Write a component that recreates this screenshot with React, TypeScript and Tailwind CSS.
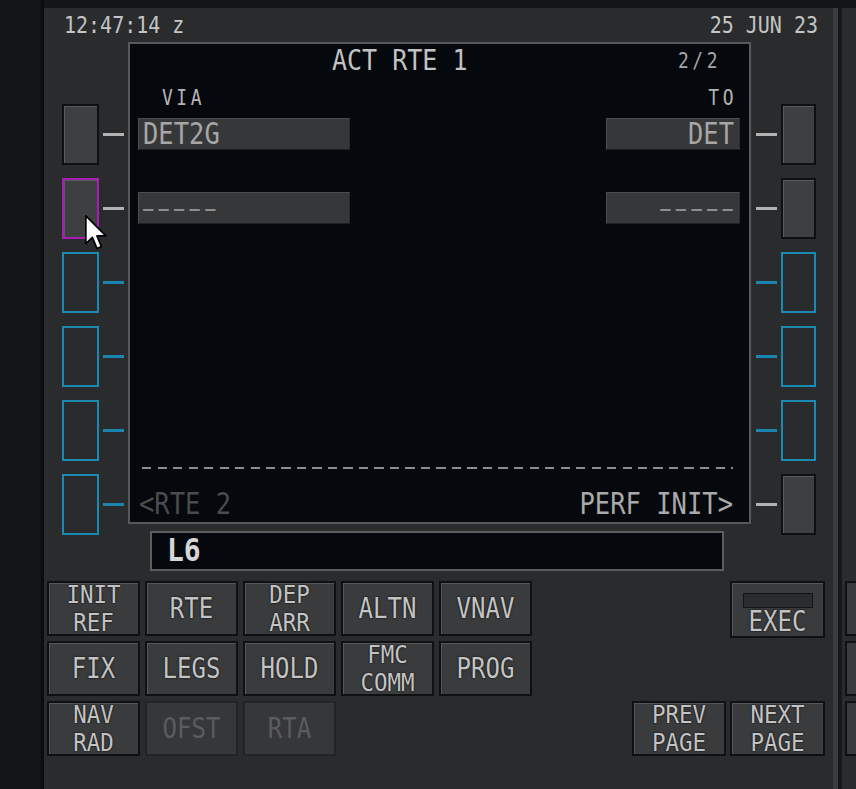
import React from "react";

type LskKind = "btn" | "sel" | "cyan";

const leftKinds: LskKind[] = ["btn", "sel", "cyan", "cyan", "cyan", "cyan"];
const rightKinds: LskKind[] = ["btn", "btn", "cyan", "cyan", "cyan", "btn"];

function LskBox({ kind, wide }: { kind: LskKind; wide?: boolean }) {
  const w = wide ? "w-[37px]" : "w-[35px]";
  if (kind === "cyan") {
    return <div className={"h-full border-2 border-[#1b8bb4] " + w} />;
  }
  if (kind === "sel") {
    return (
      <div className={"h-full border-2 border-[#a81db4] bg-[#3e3f41] shadow-[inset_1px_1px_0_#58595b] " + w} />
    );
  }
  return (
    <div className={"h-full border-2 border-[#0e0f10] bg-[#3e3f41] shadow-[inset_1px_1px_0_#5a5b5d] " + w} />
  );
}

function Dash({ kind }: { kind: LskKind }) {
  return (
    <div className={"h-[3px] w-[21px] " + (kind === "cyan" ? "bg-[#1a86ae]" : "bg-[#b2b2b2]")} />
  );
}

function Tx({ children, className }: { children: React.ReactNode; className?: string }) {
  return <span className={"inline-block scale-y-[1.16] whitespace-pre " + (className ?? "")}>{children}</span>;
}

function Field({ text, right, w }: { text: string; right?: boolean; w: string }) {
  return (
    <div
      className={
        "flex h-[32px] items-center border border-t-[#4b4c4e] border-l-[#4b4c4e] border-b-[#1e1f21] border-r-[#2a2b2d] bg-[#363739] " +
        w +
        (right ? " justify-end pr-[5px]" : " pl-[4px]")
      }
    >
      <Tx className="text-[25.5px] leading-[30px] text-[#a6a6a6]">{text}</Tx>
    </div>
  );
}

// empty entry prompt: five dashes
function Dashes({ right, w }: { right?: boolean; w: string }) {
  return (
    <div
      className={
        "flex h-[32px] items-center border border-t-[#4b4c4e] border-l-[#4b4c4e] border-b-[#1e1f21] border-r-[#2a2b2d] bg-[#363739] " +
        w +
        (right ? " justify-end pr-[1px]" : " pl-[4px]")
      }
    >
      <span className="-mt-[2px] inline-block scale-y-[1.8] whitespace-pre text-[17px] leading-[20px] tracking-[5.3px] text-[#8e8e8e]">
        –––––
      </span>
    </div>
  );
}

function Key({ lines, dim, w }: { lines: string[]; dim?: boolean; w?: string }) {
  const two = lines.length > 1;
  return (
    <div
      className={
        "flex h-[55px] items-center justify-center " +
        (w ?? "w-[93px]") +
        (dim
          ? " border-2 border-[#232426] bg-[#363739] text-[#5b5c5d]"
          : " border-2 border-[#0f1011] bg-[#3a3b3d] text-[#c3c3c3] shadow-[inset_1px_1px_0_#55565a] [text-shadow:0_0_2px_#000]")
      }
    >
      {two ? (
        <span className="inline-block scale-y-[1.08] text-center text-[22.5px] leading-[25.5px]">
          {lines[0]}
          <br />
          {lines[1]}
        </span>
      ) : (
        <span className="inline-block scale-y-[1.16] text-[24px] leading-[26px]">{lines[0]}</span>
      )}
    </div>
  );
}

const keyRows: { lines: string[]; dim?: boolean }[][] = [
  [{ lines: ["INIT", "REF"] }, { lines: ["RTE"] }, { lines: ["DEP", "ARR"] }, { lines: ["ALTN"] }, { lines: ["VNAV"] }],
  [{ lines: ["FIX"] }, { lines: ["LEGS"] }, { lines: ["HOLD"] }, { lines: ["FMC", "COMM"] }, { lines: ["PROG"] }],
  [{ lines: ["NAV", "RAD"] }, { lines: ["OFST"], dim: true }, { lines: ["RTA"], dim: true }],
];

export default function App() {
  return (
    <div className="relative flex h-[789px] w-[856px] overflow-hidden bg-[#141517] font-['DejaVu_Sans_Mono',monospace]">
      {/* dark area left of the unit */}
      <div className="w-[44px] border-r-[3px] border-[#0b0c0d] bg-[#131416]" />

      {/* CDU panel */}
      <div className="mt-[8px] flex h-[781px] w-[789px] flex-col bg-[#2a2b2d]">
        <div className="flex h-[34px] shrink-0 items-center justify-between pl-[20px] pr-[15px] text-[20px] leading-[24px] text-[#c4c4c4]">
          <Tx>12:47:14 z</Tx>
          <Tx>25 JUN 23</Tx>
        </div>

        <div className="flex h-[482px] shrink-0">
          {/* left line select keys */}
          <div className="flex w-[84px] flex-col gap-[13px] pt-[62px]">
            {leftKinds.map((k, i) => (
              <div key={i} className="flex h-[61px] shrink-0 items-center gap-[4px] pl-[18px]">
                <LskBox kind={k} wide />
                <Dash kind={k} />
              </div>
            ))}
          </div>

          {/* display */}
          <div className="flex w-[623px] flex-col border-2 border-[#56585b] bg-[#05080c]">
            <div className="flex h-[34px] shrink-0 items-center">
              <Tx className="ml-[202px] text-[25px] leading-[30px] text-[#c2c2c2]">ACT RTE 1</Tx>
              <Tx className="ml-auto mr-[28px] text-[18px] leading-[22px] tracking-[3.5px] text-[#a4a4a4]">2/2</Tx>
            </div>
            <div className="flex h-[40px] shrink-0 items-center">
              <Tx className="ml-[32px] text-[18px] leading-[22px] tracking-[3.5px] text-[#b4b4b4]">VIA</Tx>
              <Tx className="ml-auto mr-[12px] text-[18px] leading-[22px] tracking-[3.5px] text-[#b4b4b4]">TO</Tx>
            </div>
            <div className="flex shrink-0">
              <div className="ml-[8px]">
                <Field text="DET2G" w="w-[212px]" />
              </div>
              <div className="ml-auto mr-[9px]">
                <Field text="DET" right w="w-[134px]" />
              </div>
            </div>
            <div className="mt-[42px] flex shrink-0">
              <div className="ml-[8px]">
                <Dashes w="w-[212px]" />
              </div>
              <div className="ml-auto mr-[9px]">
                <Dashes right w="w-[134px]" />
              </div>
            </div>
            <div className="ml-[12px] mr-[16px] mt-[243px] h-[2px] shrink-0 bg-[repeating-linear-gradient(90deg,#8c8c8c_0_9px,transparent_9px_15.5px)]" />
            <div className="mt-[20px] flex h-[30px] shrink-0 items-center">
              <Tx className="ml-[9px] text-[25.5px] leading-[30px] text-[#4a4b4c]">{"<RTE 2"}</Tx>
              <Tx className="ml-auto mr-[16px] text-[25.5px] leading-[30px] text-[#a9a9a9]">{"PERF INIT>"}</Tx>
            </div>
          </div>

          {/* right line select keys */}
          <div className="flex w-[82px] flex-col gap-[13px] pt-[62px]">
            {rightKinds.map((k, i) => (
              <div key={i} className="flex h-[61px] shrink-0 items-center gap-[4px] pl-[5px]">
                <Dash kind={k} />
                <LskBox kind={k} />
              </div>
            ))}
          </div>
        </div>

        {/* scratchpad */}
        <div className="ml-[106px] mt-[7px] flex h-[40px] w-[574px] shrink-0 items-center border-2 border-[#5c5d5f] bg-[#05080c] pl-[15px]">
          <Tx className="text-[28px] font-bold leading-[32px] text-[#d6d6d6]">L6</Tx>
        </div>

        {/* function keys */}
        <div className="mt-[10px] flex">
          <div className="flex flex-col gap-[5px] pl-[3px]">
            {keyRows.map((row, r) => (
              <div key={r} className="flex gap-[5px]">
                {row.map((k) => (
                  <Key key={k.lines.join("")} lines={k.lines} dim={k.dim} />
                ))}
              </div>
            ))}
          </div>
          <div className="ml-auto mr-[8px] flex w-[193px] flex-col gap-[5px]">
            <div className="flex justify-end">
              <div className="flex h-[57px] w-[95px] flex-col items-center border-2 border-[#0f1011] bg-[#3a3b3d] pt-[10px] text-[#c3c3c3] shadow-[inset_1px_1px_0_#55565a] [text-shadow:0_0_2px_#000]">
                <div className="h-[15px] w-[70px] border border-[#141516] bg-[#2b2c2e]" />
                <Tx className="mt-[2px] text-[24px] leading-[24px]">EXEC</Tx>
              </div>
            </div>
            <div className="h-[53px]" />
            <div className="flex gap-[4px]">
              <Key lines={["PREV", "PAGE"]} w="w-[94px]" />
              <Key lines={["NEXT", "PAGE"]} w="w-[95px]" />
            </div>
          </div>
        </div>
      </div>

      {/* panel edge and neighbouring unit */}
      <div className="mt-[8px] w-[5px] bg-[#3b3c3e]" />
      <div className="mt-[8px] w-[4px] bg-[#17181a]" />
      <div className="mt-[8px] flex flex-1 flex-col gap-[5px] bg-[#2a2b2d] pl-[3px] pt-[573px]">
        <div className="h-[55px] border-2 border-r-0 border-[#0f1011] bg-[#3a3b3d]" />
        <div className="h-[55px] border-2 border-r-0 border-[#0f1011] bg-[#3a3b3d]" />
        <div className="h-[55px] border-2 border-r-0 border-[#0f1011] bg-[#3a3b3d]" />
      </div>

      {/* mouse pointer over LSK L2 */}
      <svg className="absolute left-[84px] top-[214px]" width="25" height="37" viewBox="0 0 13.5 20">
        <path d="M1 1 L1 16 L4.5 12.6 L7 18.6 L9.4 17.6 L7 11.8 L11.8 11.8 Z" fill="#fff" stroke="#000" strokeWidth="0.9" strokeLinejoin="round" />
      </svg>
    </div>
  );
}
